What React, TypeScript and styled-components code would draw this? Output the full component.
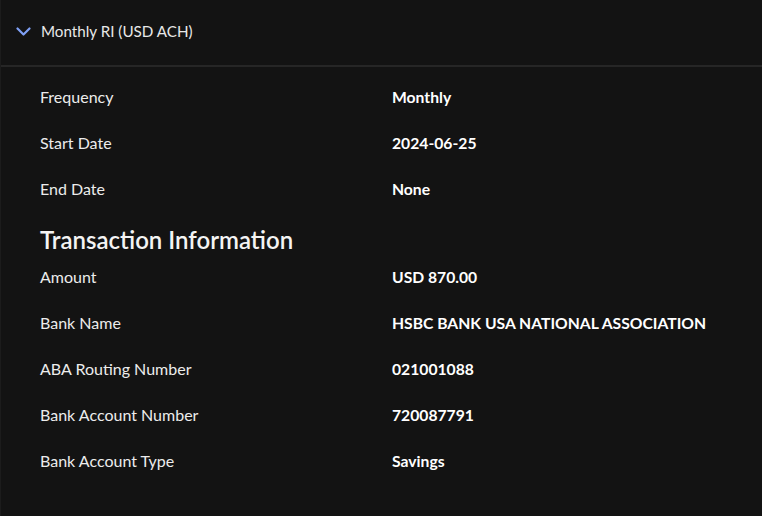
import React from "react";
import styled, { createGlobalStyle } from "styled-components";

const Global = createGlobalStyle`
  html, body { margin: 0; padding: 0; background: #131313; }
  body { font-family: Lato, "Open Sans", sans-serif; -webkit-font-smoothing: antialiased; }
`;

const Panel = styled.div`
  width: 762px;
  height: 516px;
  background: #131313;
  border-left: 1px solid #1c1c1c;
  box-sizing: border-box;
  color: #f2f2f2;
`;

const Header = styled.div`
  display: flex;
  align-items: center;
  gap: 10px;
  padding: 0 0 3px 15px;
  border-bottom: 2px solid #262626;
  box-sizing: border-box;
  height: 67px;
`;

const HeaderTitle = styled.span`
  font-size: 15.2px;
  color: #e8e8e8;
`;

const Body = styled.div`
  padding: 7px 0 0 39px;
`;

const Row = styled.div`
  display: grid;
  grid-template-columns: 352px 1fr;
  height: 46px;
  line-height: 46px;
  align-items: baseline;
  font-size: 16px;
`;

const Label = styled.span`
  color: #ececec;
`;

const Value = styled.span`
  color: #ffffff;
  font-weight: 700;
  font-size: 15.7px;
`;

const SectionTitle = styled.h2`
  margin: 14px 0 0;
  height: 28px;
  line-height: 28px;
  font-size: 24px;
  font-weight: 600;
  color: #f4f4f4;
`;

const Chevron = () => (
  <svg width="15" height="9" viewBox="0 0 15 9" fill="none">
    <path d="M1.5 1.5 L7.5 7.5 L13.5 1.5" stroke="#7fa0f5" strokeWidth="2.2" strokeLinecap="round" strokeLinejoin="round" />
  </svg>
);

const schedule = [
  ["Frequency", "Monthly"],
  ["Start Date", "2024-06-25"],
  ["End Date", "None"],
];

const transaction = [
  ["Amount", "USD 870.00"],
  ["Bank Name", "HSBC BANK USA NATIONAL ASSOCIATION"],
  ["ABA Routing Number", "021001088"],
  ["Bank Account Number", "720087791"],
  ["Bank Account Type", "Savings"],
];

export default function App() {
  return (
    <>
      <Global />
      <Panel>
        <Header>
          <Chevron />
          <HeaderTitle>Monthly RI (USD ACH)</HeaderTitle>
        </Header>
        <Body>
          {schedule.map(([l, v]) => (
            <Row key={l}>
              <Label>{l}</Label>
              <Value>{v}</Value>
            </Row>
          ))}
          <SectionTitle>Transaction Information</SectionTitle>
          {transaction.map(([l, v]) => (
            <Row key={l}>
              <Label>{l}</Label>
              <Value>{v}</Value>
            </Row>
          ))}
        </Body>
      </Panel>
    </>
  );
}
